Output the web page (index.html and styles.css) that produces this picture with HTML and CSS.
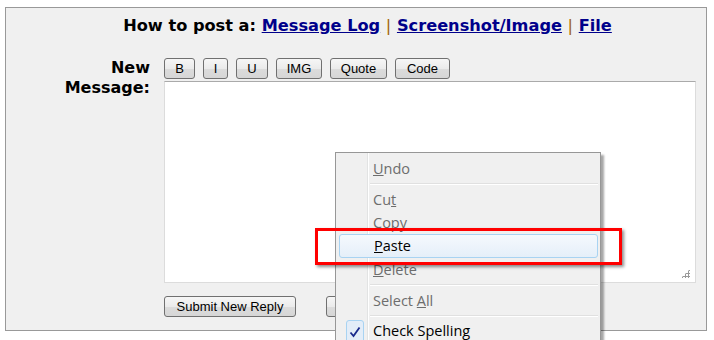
FILE: index.html
```html
<!DOCTYPE html>
<html lang="en">
<head>
  <meta charset="UTF-8" />
  <title>Post Reply</title>
  <link rel="stylesheet" href="styles.css">
</head>
<body>
  <div class="panel">
    <h3 class="howto">How to post a:
      <a href="#">Message Log</a> <span class="sep">|</span>
      <a href="#">Screenshot/Image</a> <span class="sep">|</span>
      <a href="#">File</a>
    </h3>

    <div class="form-row">
      <label class="msg-label" for="message">New Message:</label>
      <div class="editor">
        <div class="toolbar">
          <button class="btn btn-b">B</button>
          <button class="btn btn-i">I</button>
          <button class="btn btn-u">U</button>
          <button class="btn btn-img">IMG</button>
          <button class="btn btn-quote">Quote</button>
          <button class="btn btn-code">Code</button>
        </div>
        <div class="text-box">
          <textarea id="message"></textarea>
          <span class="grip"></span>
        </div>
        <div class="actions">
          <button class="btn btn-submit">Submit New Reply</button>
          <button class="btn btn-preview" aria-label="Preview"></button>
        </div>
      </div>
    </div>
  </div>

  <!-- context menu over the textarea -->
  <div class="ctx-menu">
    <div class="gutter"></div>
    <div class="item off"><u>U</u>ndo</div>
    <div class="menu-sep"></div>
    <div class="item off">Cu<u>t</u></div>
    <div class="item off"><u>C</u>opy</div>
    <div class="item hover"><u>P</u>aste</div>
    <div class="item off"><u>D</u>elete</div>
    <div class="menu-sep"></div>
    <div class="item off">Select <u>A</u>ll</div>
    <div class="menu-sep"></div>
    <div class="item checked">
      <span class="check">
        <svg width="12" height="12" viewBox="0 0 12 12"><path d="M1.5 6.5 L4.5 10 L10.5 1.5" fill="none" stroke="#1a2a8c" stroke-width="1.8"/></svg>
      </span>Check Spellin<u>g</u>
    </div>
  </div>

  <div class="callout"></div>
</body>
</html>
```

FILE: styles.css
```css
body {
  margin: 0;
  font-family: "DejaVu Sans", Verdana, sans-serif;
  background: #fff;
  height: 340px;
  overflow: hidden;
}
.panel {
  margin: 7px 0 0 5px;
  width: 700px;
  height: 322px;
  border: 1px solid #999;
  background: #f0f0f0;
}
.howto {
  margin: 0;
  padding: 8px 0 0 23px;
  font-size: 16.2px;
  line-height: 20px;
  text-align: center;
  color: #000;
}
.howto a {
  color: #00008b;
}
.howto .sep {
  color: #a0620a;
  font-weight: normal;
}
.form-row {
  display: grid;
  grid-template-columns: 144px 532px;
  column-gap: 14px;
  margin-top: 22px;
}
.msg-label {
  font-weight: bold;
  font-size: 16px;
  line-height: 20px;
  text-align: right;
  padding-left: 50px;
}
.toolbar {
  display: flex;
  gap: 8px;
  height: 21px;
  margin-bottom: 2px;
}
.btn {
  font-family: "Liberation Sans", Arial, sans-serif;
  font-size: 13px;
  height: 21px;
  padding: 0 6px;
  border: 1px solid #707070;
  border-radius: 3px;
  background: linear-gradient(#f6f6f6 0%, #ebebeb 50%, #dcdcdc 51%, #d6d6d6 100%);
  color: #000;
}
.btn-b { width: 31px; }
.btn-i { width: 25px; }
.btn-u { width: 32px; }
.btn-img { width: 46px; }
.btn-quote { width: 57px; }
.btn-code { width: 55px; }
.text-box {
  position: relative;
  width: 532px;
  height: 202px;
}
.text-box textarea {
  display: block;
  width: 100%;
  height: 100%;
  box-sizing: border-box;
  border: 1px solid #dcdcdc;
  border-top-color: #aaa;
  background: #fff;
  resize: none;
}
.grip {
  position: absolute;
  right: 6px;
  bottom: 5px;
  width: 9px;
  height: 9px;
  background:
    radial-gradient(circle, #999 1px, transparent 1.2px) 0 0 / 3px 3px;
  clip-path: polygon(100% 0, 100% 100%, 0 100%);
}
.actions {
  display: flex;
  gap: 30px;
  margin-top: 13px;
}
.btn-submit { width: 132px; }
.btn-preview { width: 80px; }

.ctx-menu {
  position: absolute;
  left: 335px;
  top: 152px;
  width: 262px;
  height: 183px;
  padding: 4px 0 0 2px;
  background: #f0f0f0;
  border: 1px solid #979797;
  border-bottom: none;
  box-shadow: 3px 3px 2px rgba(0, 0, 0, 0.35);
  font-family: "Open Sans", "Segoe UI", sans-serif;
  font-size: 14.5px;
  overflow: hidden;
}
.gutter {
  position: absolute;
  left: 31px;
  top: 0;
  bottom: 0;
  width: 1px;
  background: #e2e3e3;
  border-right: 1px solid #fff;
}
.item {
  position: relative;
  height: 23px;
  line-height: 23px;
  padding-left: 35px;
  margin-right: 2px;
  color: #000;
}
.item.off {
  color: #6d6d6d;
}
.item.hover {
  margin-left: 1px;
  padding-left: 34px;
  height: 22px;
  line-height: 22px;
  border: 1px solid #a8d3f2;
  border-radius: 3px;
  background: linear-gradient(#f5f9fd, #e5eff9);
}
.menu-sep {
  height: 1px;
  margin: 3px 2px 3px 32px;
  background: #e0e0e0;
  border-bottom: 1px solid #fff;
}
.checked {
  line-height: 22px;
}
.check {
  position: absolute;
  left: 8px;
  top: 0;
  width: 16px;
  height: 22px;
  display: flex;
  align-items: center;
  justify-content: center;
  border: 1px solid #a8d3f2;
  border-radius: 3px;
  background: #e3edf8;
}

/* red highlight drawn over the screenshot */
.callout {
  position: absolute;
  left: 315px;
  top: 228px;
  width: 301px;
  height: 31px;
  border: 3px solid #f00;
  box-shadow: 2px 2px 3px rgba(0, 0, 0, 0.45);
}
```
